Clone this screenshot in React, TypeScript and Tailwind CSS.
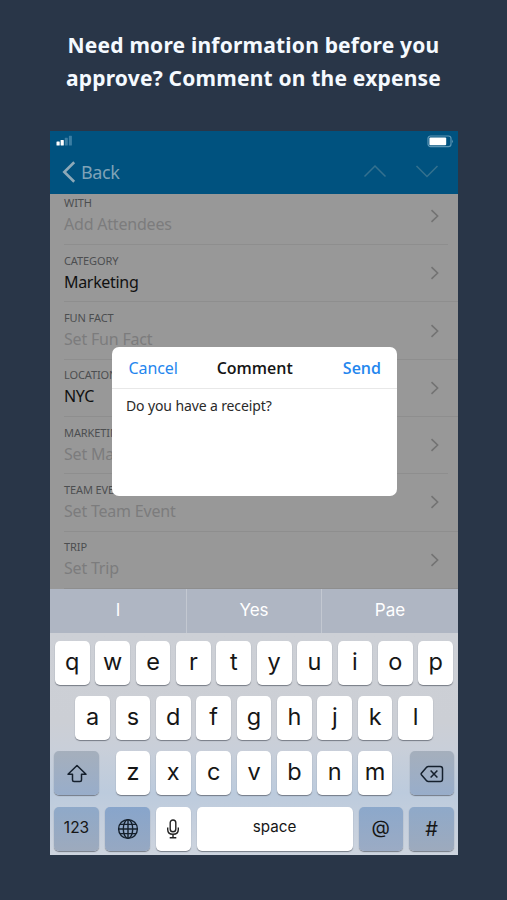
import React from "react";

type Field = { label: string; value: string; filled?: boolean; inset?: boolean };

const fields: Field[] = [
  { label: "WITH", value: "Add Attendees", inset: true },
  { label: "CATEGORY", value: "Marketing", filled: true },
  { label: "FUN FACT", value: "Set Fun Fact" },
  { label: "LOCATION", value: "NYC", filled: true },
  { label: "MARKETING", value: "Set Marketing", inset: true },
  { label: "TEAM EVENT", value: "Set Team Event" },
  { label: "TRIP", value: "Set Trip" },
];

function Chevron({ d, className, width = 1.5 }: { d: string; className: string; width?: number }) {
  return (
    <svg viewBox="0 0 24 24" className={className} fill="none" stroke="currentColor" strokeWidth={width}>
      <path d={d} />
    </svg>
  );
}

function StatusBar() {
  return (
    <div className="flex h-[20px] items-center justify-between pl-[5.5px] pr-[4px]">
      <svg width="17" height="12" viewBox="0 0 17 12">
        <rect x="0.5" y="6.5" width="3.2" height="4" rx="0.6" fill="#fff" />
        <rect x="4.6" y="5" width="3.2" height="5.5" rx="0.6" fill="#fff" />
        <rect x="8.8" y="2.8" width="3" height="7.7" rx="0.6" fill="#3b7ea3" />
        <rect x="12.9" y="0.8" width="3" height="9.7" rx="0.6" fill="#3b7ea3" />
      </svg>
      <svg width="27" height="13" viewBox="0 0 27 13">
        <rect x="1" y="1" width="23" height="10.6" rx="2.6" fill="none" stroke="#5c96b5" strokeWidth="1.2" />
        <rect x="2.4" y="2.4" width="16.8" height="7.8" rx="1" fill="#fff" />
        <path d="M25.2 4.4Q26.6 6.3 25.2 8.2Z" fill="#8db5ca" />
      </svg>
    </div>
  );
}

function Row({ label, value, filled, inset }: Field) {
  return (
    <div className="h-[57.3px] pl-[14px]">
      <div
        className={
          "flex h-full items-center justify-between border-b border-[#8e8e8e] " +
          (inset ? "mr-[10px] pr-[8.5px]" : "pr-[18.5px]")
        }
      >
        <div>
          <div className="text-[11px] leading-[16px] tracking-[-0.1px] text-[#4c4e50]">{label}</div>
          <div
            className={
              "mt-[2px] text-[16px] leading-[23px] whitespace-nowrap " +
              (filled ? "tracking-[-0.32px] text-[#111]" : "tracking-[-0.2px] text-[#7c7c7d]")
            }
          >
            {value}
          </div>
        </div>
        <svg width="10" height="14" viewBox="0 0 10 14" fill="none" stroke="#737373" strokeWidth="1.6">
          <path d="M1.5 1.2L7.6 7L1.5 12.8" />
        </svg>
      </div>
    </div>
  );
}

function Key({ children, className = "w-[34.7px] bg-white text-[23.5px]" }: { children: React.ReactNode; className?: string }) {
  return (
    <div
      className={
        "flex h-[44px] shrink-0 items-center justify-center rounded-[5px] text-[#161616] shadow-[0_1px_1px_rgba(90,95,105,0.75)] " +
        className
      }
    >
      {children}
    </div>
  );
}

function Letters({ text }: { text: string }) {
  return (
    <div className="flex gap-[5.7px]">
      {text.split("").map((c) => (
        <Key key={c}>
          <span className="-mt-[3px]">{c}</span>
        </Key>
      ))}
    </div>
  );
}

function Keyboard() {
  return (
    <div className="h-[222px] bg-[linear-gradient(180deg,#cdd0d6_0%,#cccfd5_40%,#c9cfd9_52%,#bccbdd_72%,#c5cfdd_85%,#cdd4de_100%)] px-[4px] pt-[8px] font-['Inter','Liberation_Sans',sans-serif]">
      <div className="flex flex-col gap-[11.2px]">
        <div className="flex justify-center">
          <Letters text="qwertyuiop" />
        </div>
        <div className="flex justify-center">
          <Letters text="asdfghjkl" />
        </div>
        <div className="flex justify-between">
          <Key className="w-[44.5px] bg-[linear-gradient(180deg,#a5afbc,#98adca)]">
            <svg width="22" height="20" viewBox="0 0 22 20" fill="none" stroke="#15202d" strokeWidth="1.5" strokeLinejoin="round" className="mt-[2px] ml-[2px]">
              <path d="M11 1.5L20 10.3H15.5V16Q15.5 17.5 14 17.5H8Q6.5 17.5 6.5 16V10.3H2Z" />
            </svg>
          </Key>
          <Letters text="zxcvbnm" />
          <Key className="w-[44.5px] bg-[linear-gradient(180deg,#a5afbc,#98adca)]">
            <svg width="24" height="18" viewBox="0 0 24 18" fill="none" stroke="#15202d" strokeWidth="1.5" strokeLinejoin="round" className="mt-[1px]">
              <path d="M8.2 1.5H20.2Q22.5 1.5 22.5 3.8V14.2Q22.5 16.5 20.2 16.5H8.2Q7.4 16.5 6.8 15.9L1.4 9.7Q.9 9 1.4 8.3L6.8 2.1Q7.4 1.5 8.2 1.5Z" />
              <path d="M10.6 5.4L17.4 12.6M17.4 5.4L10.6 12.6" />
            </svg>
          </Key>
        </div>
        <div className="flex justify-between">
          <Key className="w-[45px] bg-[linear-gradient(180deg,#8fa9c9,#9daabd)] text-[15.5px]">
            <span className="-mt-[1px]">123</span>
          </Key>
          <Key className="w-[45px] bg-[linear-gradient(180deg,#88a5cb,#96a8c2)]">
            <svg width="22" height="22" viewBox="0 0 22 22" fill="none" stroke="#15202d" strokeWidth="1.4">
              <circle cx="11" cy="11" r="9.4" />
              <ellipse cx="11" cy="11" rx="4.7" ry="9.4" />
              <path d="M11 1.6V20.4M1.6 11H20.4M3 6.4H19M3 15.600H19" />
            </svg>
          </Key>
          <Key className="w-[34.5px] bg-white">
            <svg width="14" height="20" viewBox="0 0 14 20" fill="none" stroke="#222" strokeWidth="1.4">
              <rect x="4.2" y="1" width="5.6" height="11.8" rx="2.8" />
              <path d="M1.7 8.500V10.500Q1.7 15.300 7 15.300T12.300 10.500V8.500M7 15.300V18.700M3.700 18.800H10.300" />
            </svg>
          </Key>
          <Key className="w-[156px] bg-white text-[15.200px]">
            <span className="-mt-[2px]">space</span>
          </Key>
          <Key className="w-[44.5px] bg-[linear-gradient(180deg,#8ca8cb,#9babc4)] text-[19px]">@</Key>
          <Key className="w-[45px] bg-[linear-gradient(180deg,#8fa9c9,#9daabd)] text-[20px]">#</Key>
        </div>
      </div>
    </div>
  );
}

export default function App() {
  return (
    <div className="flex h-[900px] w-[507px] flex-col overflow-hidden bg-[#293648] font-['Noto_Sans','Open_Sans',sans-serif]">
      <h1 className="pt-[29px] text-center text-[21px] leading-[33px] font-bold tracking-[0.2px] text-[#f5faff]">
        Need more information before you
        <br />
        approve? Comment on the expense
      </h1>

      <div className="relative mt-[36px] ml-[50px] flex h-[724px] w-[408px] flex-col overflow-hidden">
        <header className="h-[63px] shrink-0 bg-[#00527f]">
          <StatusBar />
          <div className="flex h-[42px] items-center justify-between pr-[19px] pl-[12px] text-[#7fa3b7]">
            <div className="flex items-center gap-[5px]">
              <svg width="14" height="22" viewBox="0 0 14 22" fill="none" stroke="#8da9b8" strokeWidth="2.6">
                <path d="M12.2 1.3L2.3 11L12.2 20.7" />
              </svg>
              <span className="text-[18px] leading-[24px] tracking-[-0.4px]">Back</span>
            </div>
            <div className="flex gap-[28px] text-[#34718f]">
              <Chevron className="h-[24px] w-[24px]" d="M1.5 16.500L12 6L22.500 16.500" />
              <Chevron className="h-[24px] w-[24px]" d="M1.5 6L12 16.500L22.500 6" />
            </div>
          </div>
        </header>

        <main className="h-[394.500px] shrink-0 overflow-hidden bg-[#989898]">
          <div className="-mt-[6.200px]">
            {fields.map((f) => (
              <Row key={f.label} {...f} />
            ))}
          </div>
        </main>

        <div className="grid h-[44.500px] shrink-0 grid-cols-3 bg-[#afb6c3] text-center font-['Inter','Liberation_Sans',sans-serif] text-[17px] leading-[42px] text-white">
          <div>I</div>
          <div className="border-x border-[#c3c8d1]">Yes</div>
          <div>Pae</div>
        </div>

        <Keyboard />

        <section className="absolute top-[216px] left-[61.500px] h-[149px] w-[285.5px] rounded-[7px] bg-white">
          <div className="grid h-[42px] grid-cols-3 items-center border-b border-[#e8e8e8] pr-[16px] pl-[17px] text-[16px]">
            <span className="tracking-[-0.1px] text-[#2486ee]">Cancel</span>
            <span className="text-center font-['Open_Sans','Noto_Sans',sans-serif] font-semibold text-[#151515]">Comment</span>
            <span className="text-right font-['Open_Sans','Noto_Sans',sans-serif] font-semibold text-[#2486ee]">Send</span>
          </div>
          <p className="pt-[7px] pl-[14.500px] text-[14px] leading-[20px] tracking-[-0.12px] text-[#2a2a2a]">Do you have a receipt?</p>
        </section>
      </div>
    </div>
  );
}
